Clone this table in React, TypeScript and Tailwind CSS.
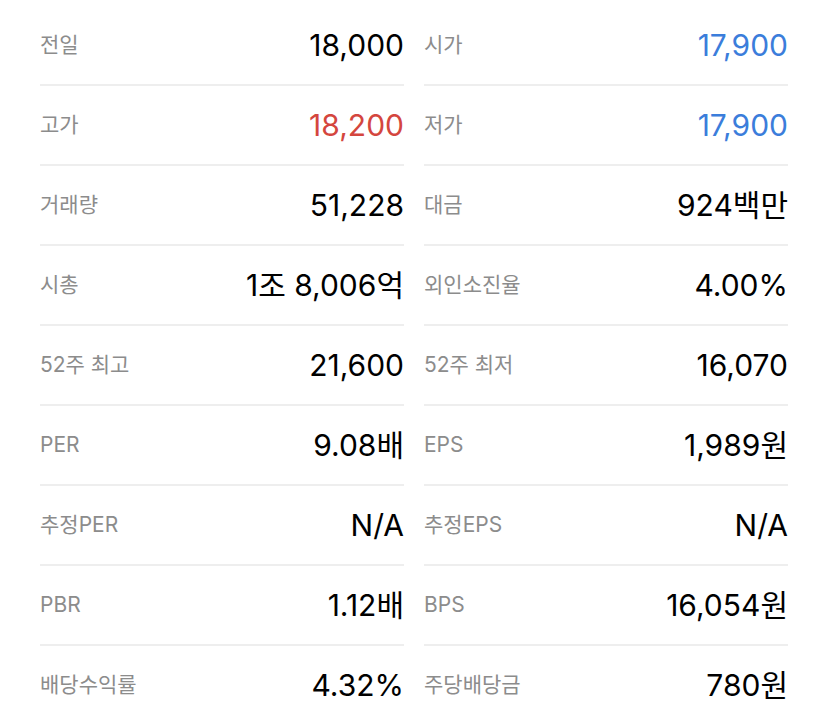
const rows = [
  { l: "전일", lv: "18,000", lc: "", r: "시가", rv: "17,900", rc: "blue" },
  { l: "고가", lv: "18,200", lc: "red", r: "저가", rv: "17,900", rc: "blue" },
  { l: "거래량", lv: "51,228", lc: "", r: "대금", rv: "924백만", rc: "" },
  { l: "시총", lv: "1조 8,006억", lc: "", r: "외인소진율", rv: "4.00%", rc: "" },
  { l: "52주 최고", lv: "21,600", lc: "", r: "52주 최저", rv: "16,070", rc: "" },
  { l: "PER", lv: "9.08배", lc: "", r: "EPS", rv: "1,989원", rc: "" },
  { l: "추정PER", lv: "N/A", lc: "", r: "추정EPS", rv: "N/A", rc: "" },
  { l: "PBR", lv: "1.12배", lc: "", r: "BPS", rv: "16,054원", rc: "" },
  { l: "배당수익률", lv: "4.32%", lc: "", r: "주당배당금", rv: "780원", rc: "" },
];

function valueColor(c: string) {
  if (c === "red") return "text-[#d4463e]";
  if (c === "blue") return "text-[#3b7ddb]";
  return "text-black";
}

function Cell({ label, value, color }: { label: string; value: string; color: string }) {
  return (
    <div className="flex h-[80px] items-center justify-between border-b-2 border-[#eeeeee]">
      <span className="text-[21px] text-[#8c8c8c]">{label}</span>
      <span className={`text-[30px] font-normal ${valueColor(color)}`}>{value}</span>
    </div>
  );
}

export default function App() {
  return (
    <div
      className="min-h-screen bg-white px-[40px] pt-[6px]"
      style={{ fontFamily: 'Inter, "Noto Sans CJK KR", sans-serif' }}
    >
      <div className="grid grid-cols-2 gap-x-[20px]">
        {rows.map((row) => (
          <>
            <Cell key={row.l} label={row.l} value={row.lv} color={row.lc} />
            <Cell key={row.r} label={row.r} value={row.rv} color={row.rc} />
          </>
        ))}
      </div>
    </div>
  );
}
